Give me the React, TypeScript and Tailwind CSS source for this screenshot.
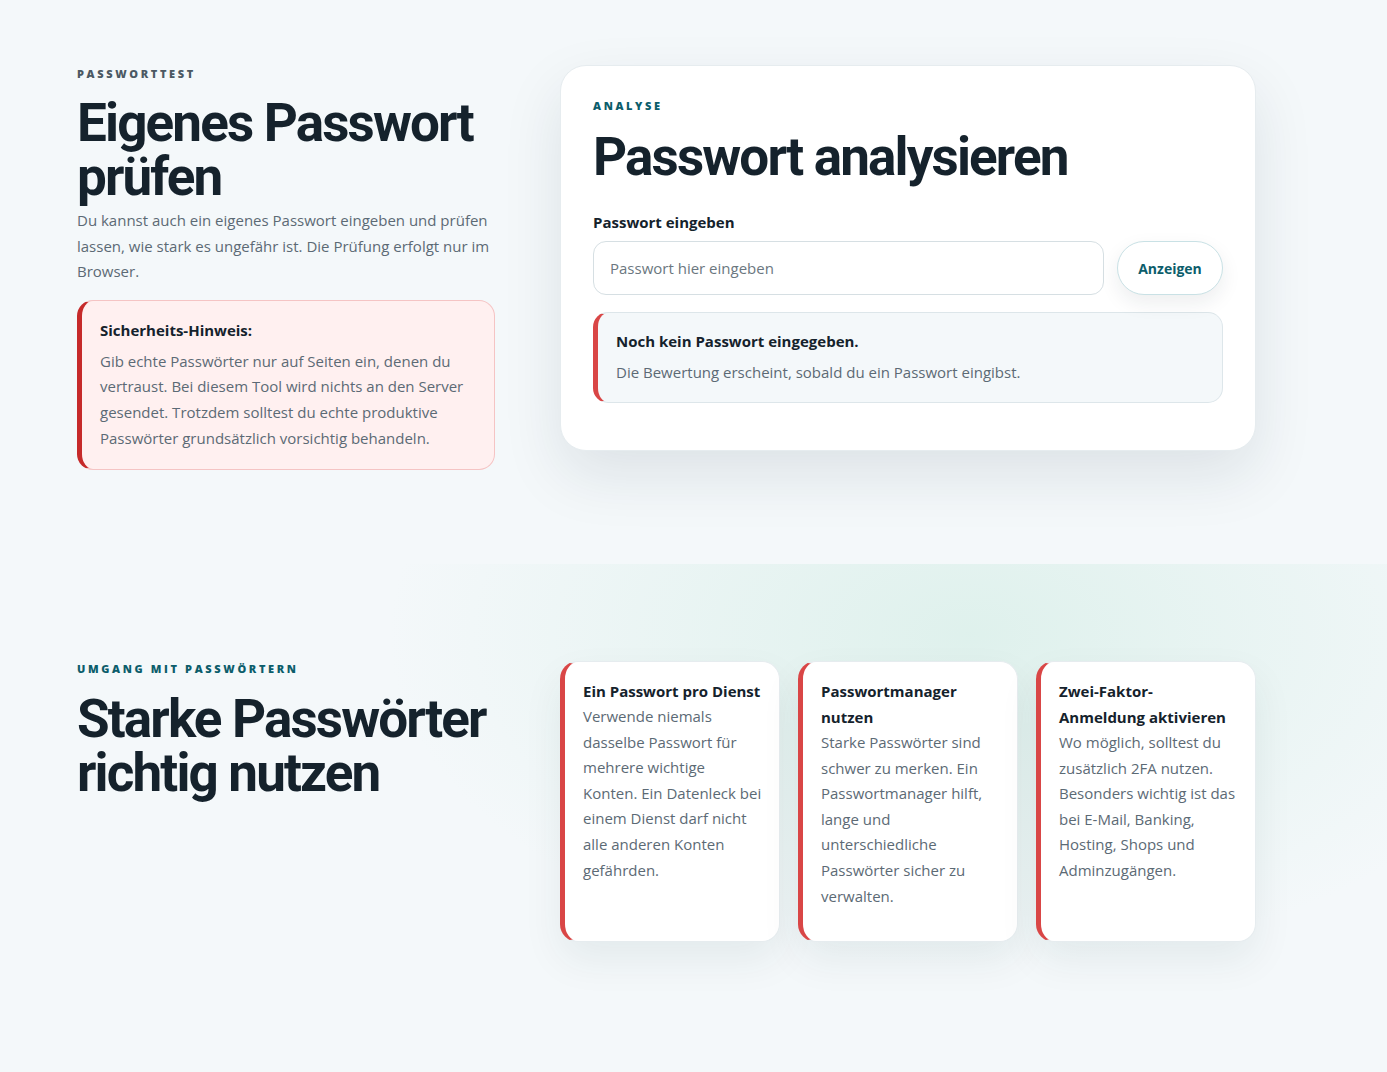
import React from "react";

// ─── Passwort page ────────────────────────────────────────
// Two stacked sections: the password test with an analysis card, and
// three tip cards on handling passwords.

const head = "font-['Roboto',sans-serif] font-bold text-[#15222c] tracking-[-0.035em]";
const body = "font-['Open_Sans',sans-serif]";

const tips = [
  {
    title: "Ein Passwort pro Dienst",
    text: "Verwende niemals dasselbe Passwort für mehrere wichtige Konten. Ein Datenleck bei einem Dienst darf nicht alle anderen Konten gefährden.",
  },
  {
    title: "Passwortmanager nutzen",
    text: "Starke Passwörter sind schwer zu merken. Ein Passwortmanager hilft, lange und unterschiedliche Passwörter sicher zu verwalten.",
  },
  {
    title: "Zwei-Faktor-\nAnmeldung aktivieren",
    text: "Wo möglich, solltest du zusätzlich 2FA nutzen. Besonders wichtig ist das bei E-Mail, Banking, Hosting, Shops und Adminzugängen.",
  },
];

function TipCard({ title, text }: { title: string; text: string }) {
  return (
    <div className="min-h-[281px] rounded-[18px] border border-[#e6ecef] border-l-[5px] border-l-[#d94646] bg-white pl-[18px] pr-4 pt-[16px] shadow-[0_18px_40px_rgba(20,50,60,0.07)]">
      <h3 className={`${body} whitespace-pre-line text-[15px] font-bold leading-[26px] text-[#15222c]`}>{title}</h3>
      <p className={`${body} text-[15px] leading-[25.6px] text-[#5c6a75]`}>{text}</p>
    </div>
  );
}

export default function App() {
  return (
    <div className={`${body} min-h-[1072px] bg-[#f4f8fa]`}>
      {/* Section 1 */}
      <section className="h-[564px] pt-[66px]">
        <div className="ml-[77px] grid w-[1179px] grid-cols-[418px_696px] gap-x-[65px]">
          <div>
            <p className="text-[11px] font-extrabold uppercase leading-4 tracking-[0.24em] text-[#4b5963]">Passworttest</p>
            <h1 className={`${head} mt-[14px] text-[53px] leading-[54px]`}>Eigenes Passwort prüfen</h1>
            <p className="mt-[4px] text-[15px] leading-[25.6px] text-[#5c6a75]">
              Du kannst auch ein eigenes Passwort eingeben und prüfen lassen, wie stark es ungefähr ist. Die Prüfung erfolgt nur im Browser.
            </p>
            <div className="mt-[15px] rounded-[16px] border border-[#f5c4c4] border-l-[5px] border-l-[#c62a2a] bg-[#fff0f0] pb-[18px] pl-[18px] pr-4 pt-[17px]">
              <p className="text-[15px] font-bold leading-6 text-[#15222c]">Sicherheits-Hinweis:</p>
              <p className="mt-[7px] text-[15px] leading-[25.6px] text-[#5c6a75]">
                Gib echte Passwörter nur auf Seiten ein, denen du vertraust. Bei diesem Tool wird nichts an den Server gesendet. Trotzdem solltest du echte produktive Passwörter grundsätzlich vorsichtig behandeln.
              </p>
            </div>
          </div>

          <div className="-mt-px h-[386px] rounded-[26px] border border-[#e6ecef] bg-white px-[32px] pt-[32px] shadow-[0_24px_60px_rgba(20,40,55,0.10)]">
            <p className="text-[11px] font-extrabold uppercase leading-4 tracking-[0.24em] text-[#0c5d6b]">Analyse</p>
            <h2 className={`${head} mt-[12px] text-[53px] leading-[62px]`}>Passwort analysieren</h2>
            <label className="mt-[22px] block text-[15px] font-bold leading-6 text-[#15222c]">Passwort eingeben</label>
            <div className="mt-[7px] flex gap-[13px]">
              <input
                placeholder="Passwort hier eingeben"
                className="h-[54px] flex-1 rounded-[13px] border border-[#d6dfe3] bg-white px-4 text-[15px] text-[#15222c] outline-none placeholder:text-[#6b7780]"
              />
              <button className="h-[54px] w-[106px] rounded-full border border-[#c9e1e5] bg-white text-[14px] font-bold text-[#0c5d6b] shadow-[0_8px_20px_rgba(20,40,55,0.08)]">
                Anzeigen
              </button>
            </div>
            <div className="mt-[17px] rounded-[15px] border border-[#dde6ea] border-l-[5px] border-l-[#d94646] bg-[#f4f8fa] pb-[18px] pl-[18px] pr-4 pt-[16px]">
              <p className="text-[15px] font-bold leading-6 text-[#15222c]">Noch kein Passwort eingegeben.</p>
              <p className="mt-[7px] text-[15px] leading-6 text-[#5c6a75]">Die Bewertung erscheint, sobald du ein Passwort eingibst.</p>
            </div>
          </div>
        </div>
      </section>

      {/* Section 2 */}
      <section className="h-[474px] bg-[radial-gradient(ellipse_42%_70%_at_70%_15%,rgba(205,235,225,0.55),rgba(244,248,250,0)_100%)] pt-[97px]">
        <div className="ml-[77px] grid w-[1179px] grid-cols-[418px_696px] gap-x-[65px]">
          <div>
            <p className="text-[11px] font-extrabold uppercase leading-4 tracking-[0.24em] text-[#0c5d6b]">Umgang mit Passwörtern</p>
            <h2 className={`${head} mt-[15px] text-[53px] leading-[54px]`}>Starke Passwörter richtig nutzen</h2>
          </div>
          <div className="grid grid-cols-3 gap-[18px]">
            {tips.map((t) => (
              <TipCard key={t.title} title={t.title} text={t.text} />
            ))}
          </div>
        </div>
      </section>
    </div>
  );
}
